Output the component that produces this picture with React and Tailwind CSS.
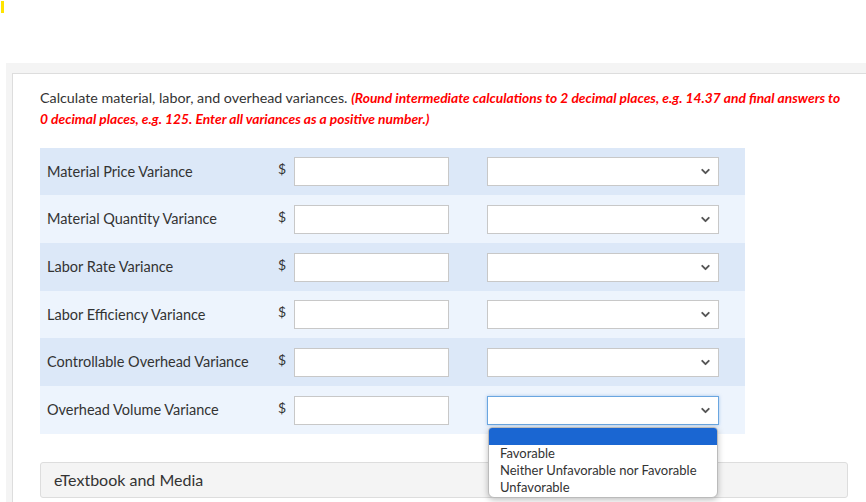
import { ChevronDown } from "lucide-react";

const rows = [
  { label: "Material Price Variance", h: "h-[47px]" },
  { label: "Material Quantity Variance", h: "h-[48px]" },
  { label: "Labor Rate Variance", h: "h-[48px]" },
  { label: "Labor Efficiency Variance", h: "h-[47px]" },
  { label: "Controllable Overhead Variance", h: "h-[48px]" },
  { label: "Overhead Volume Variance", h: "h-[48px]" },
];

const options = ["Favorable", "Neither Unfavorable nor Favorable", "Unfavorable"];

function SelectBox({ open }) {
  return (
    <div className="relative">
      <div
        className={
          open
            ? "flex h-[29px] w-[232px] items-center justify-end border border-[#6aa6e0] bg-white pr-[6px] shadow-[0_0_3px_rgba(90,150,220,0.5)]"
            : "flex h-[29px] w-[232px] items-center justify-end border border-[#c8c8c8] bg-white pr-[6px]"
        }
      >
        <ChevronDown className="h-[13px] w-[13px] text-[#555]" strokeWidth={3.5} />
      </div>
      {open && (
        <div className="absolute left-px top-[31px] z-10 w-[230px] overflow-hidden rounded-b-[6px] rounded-t-[4px] border border-[#bbb] bg-white pb-px shadow-[0_2px_6px_rgba(0,0,0,0.25)]">
          <div className="h-[17px] bg-[#1a66d2]" />
          {options.map((o) => (
            <div key={o} className="pl-[11px] text-[13px] leading-[17px] text-[#333]">
              {o}
            </div>
          ))}
        </div>
      )}
    </div>
  );
}

export default function App() {
  return (
    <div className="h-[502px] w-[866px] overflow-hidden bg-white font-['Lato',sans-serif] text-[#333]">
      <div className="pl-px pt-px">
        <div className="h-[12px] w-[3px] bg-[#ffe400]" />
      </div>

      <div className="ml-[6px] mt-[50px] bg-[#f4f4f4] pl-[6px] pt-[10px]">
        <div className="h-[440px] border-l border-t border-[#dddddd] bg-white pl-[27px] pt-[13px]">
          {/* Instructions */}
          <p className="w-[810px] text-[14.3px] leading-[21px]">
            Calculate material, labor, and overhead variances.{" "}
            <span className="text-[13.8px] font-bold italic text-[#ff0000]">
              (Round intermediate calculations to 2 decimal places, e.g. 14.37 and final answers to 0 decimal
              places, e.g. 125. Enter all variances as a positive number.)
            </span>
          </p>

          {/* Variance table */}
          <div className="mt-[19px] w-[705px]">
            {rows.map((r, i) => (
              <div
                key={r.label}
                className={
                  (i % 2 === 0 ? "bg-[#dce8f8] " : "bg-[#edf4fd] ") + r.h + " flex items-center pl-[7px]"
                }
              >
                <div className="w-[231px] text-[14.5px]">{r.label}</div>
                <div className="mb-[6px] w-[16px] text-[14px]">$</div>
                <div className="h-[29px] w-[155px] border border-[#c8c8c8] bg-white" />
                <div className="ml-[38px]">
                  <SelectBox open={i === rows.length - 1} />
                </div>
              </div>
            ))}
          </div>

          {/* eTextbook */}
          <div className="mt-[28px] flex h-[36px] w-[808px] items-center rounded-[3px] border border-[#dddddd] bg-[#f4f4f4] pl-[13px] text-[16px]">
            eTextbook and Media
          </div>
        </div>
      </div>
    </div>
  );
}
